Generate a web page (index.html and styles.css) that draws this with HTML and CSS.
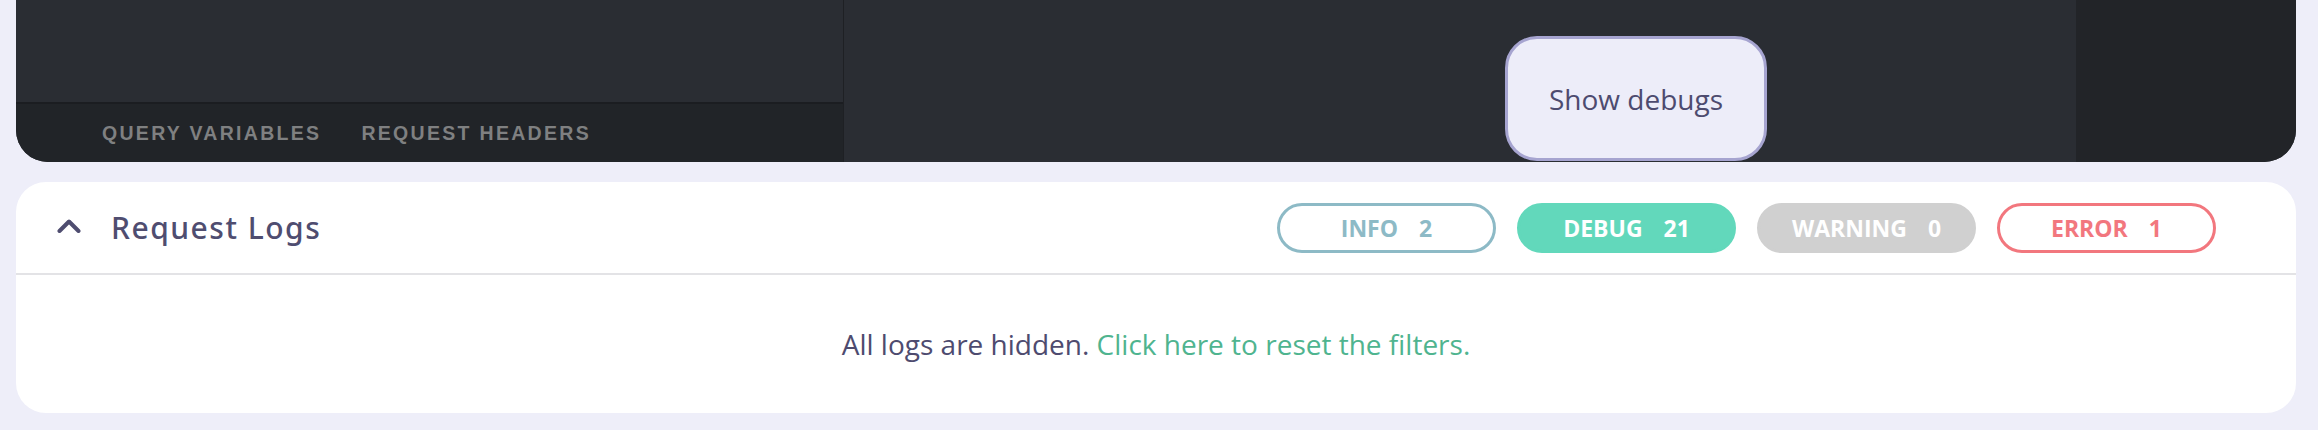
FILE: index.html
```html
<!DOCTYPE html>
<html>
<head>
<meta charset="utf-8">
<link rel="stylesheet" href="styles.css">
</head>
<body>
<div class="page">
  <div class="workspace">
    <div class="left-pane">
      <div class="editor"></div>
      <div class="tabbar">
        <span class="tab">Query Variables</span>
        <span class="tab">Request Headers</span>
      </div>
    </div>
    <div class="results">
      <button class="debug-toggle">Show debugs</button>
    </div>
    <div class="side-col"></div>
  </div>

  <div class="logs">
    <div class="logs-header">
      <svg class="chevron" width="24" height="14" viewBox="0 0 24 14"><path d="M2.5 12 L12 2.5 L21.5 12" fill="none" stroke="#4f4d70" stroke-width="4" stroke-linecap="round" stroke-linejoin="round"/></svg>
      <span class="logs-title">Request Logs</span>
      <div class="filters">
        <span class="pill pill-info"><span class="pill-name">INFO</span><span class="pill-count">2</span></span>
        <span class="pill pill-debug"><span class="pill-name">DEBUG</span><span class="pill-count">21</span></span>
        <span class="pill pill-warning"><span class="pill-name">WARNING</span><span class="pill-count">0</span></span>
        <span class="pill pill-error"><span class="pill-name">ERROR</span><span class="pill-count">1</span></span>
      </div>
    </div>
    <div class="logs-body">
      <p class="empty">All logs are hidden. <a class="reset" href="#">Click here to reset the filters.</a></p>
    </div>
  </div>
</div>
</body>
</html>
```

FILE: styles.css
```css
html, body {
  margin: 0;
  padding: 0;
}
body {
  background: #eeeef9;
  width: 2318px;
  height: 430px;
  overflow: hidden;
}
.page {
  padding: 0 22px 0 16px;
}
.workspace {
  display: flex;
  height: 162px;
  background: #2a2d33;
  border-radius: 0 0 32px 32px;
  overflow: hidden;
}
.left-pane {
  width: 827px;
  display: flex;
  flex-direction: column;
  border-right: 1px solid #1e2024;
}
.editor {
  flex: 1;
  background: #2a2d33;
}
.tabbar {
  height: 58px;
  border-top: 2px solid #1b1d21;
  background: #212428;
  display: flex;
  align-items: center;
  padding-left: 86px;
  gap: 40px;
}
.tab {
  font-family: "Liberation Sans", Arial, sans-serif;
  font-weight: 700;
  font-size: 19.5px;
  letter-spacing: 2.3px;
  text-transform: uppercase;
  color: #7f8081;
}
.results {
  flex: 1;
  position: relative;
  background: #2a2d33;
}
.side-col {
  width: 220px;
  background: #222428;
}
.debug-toggle {
  position: absolute;
  left: 661px;
  top: 36px;
  width: 262px;
  height: 125px;
  box-sizing: border-box;
  background: #ededf9;
  border: 3px solid #a6a4d0;
  border-radius: 32px;
  font-family: "Open Sans", sans-serif;
  font-size: 28px;
  color: #4d4b6f;
  padding: 0;
  cursor: pointer;
}
.logs {
  margin-top: 20px;
  height: 231px;
  background: #ffffff;
  border-radius: 30px;
  overflow: hidden;
  display: flex;
  flex-direction: column;
}
.logs-header {
  height: 93px;
  flex: none;
  box-sizing: border-box;
  border-bottom: 2px solid #e3e3e6;
  display: flex;
  align-items: center;
  padding: 0 80px 0 41px;
}
.chevron {
  display: block;
  margin-top: -3px;
}
.logs-title {
  margin-left: 30px;
  font-family: "Noto Sans", sans-serif;
  font-weight: 500;
  font-size: 30px;
  letter-spacing: 1.5px;
  color: #4f4d70;
}
.filters {
  margin-left: auto;
  display: flex;
  gap: 21px;
}
.pill {
  width: 219px;
  height: 50px;
  box-sizing: border-box;
  border-radius: 25px;
  border: 3px solid transparent;
  display: flex;
  align-items: center;
  justify-content: center;
  gap: 21px;
  font-family: "Open Sans", sans-serif;
  font-weight: 700;
  font-size: 23px;
}
.pill-info {
  border-color: #8dbac6;
  color: #8dbac6;
}
.pill-debug {
  background: #62d8bb;
  border-color: #62d8bb;
  color: #ffffff;
}
.pill-warning {
  background: #d0d0d0;
  border-color: #d0d0d0;
  color: #ffffff;
}
.pill-error {
  border-color: #f2777e;
  color: #f2777e;
}
.logs-body {
  flex: 1;
  display: flex;
  align-items: center;
  justify-content: center;
}
.empty {
  margin: 0;
  font-family: "Open Sans", sans-serif;
  font-size: 28px;
  color: #4e4b6f;
}
.reset {
  color: #4fb48f;
  text-decoration: none;
}
```
